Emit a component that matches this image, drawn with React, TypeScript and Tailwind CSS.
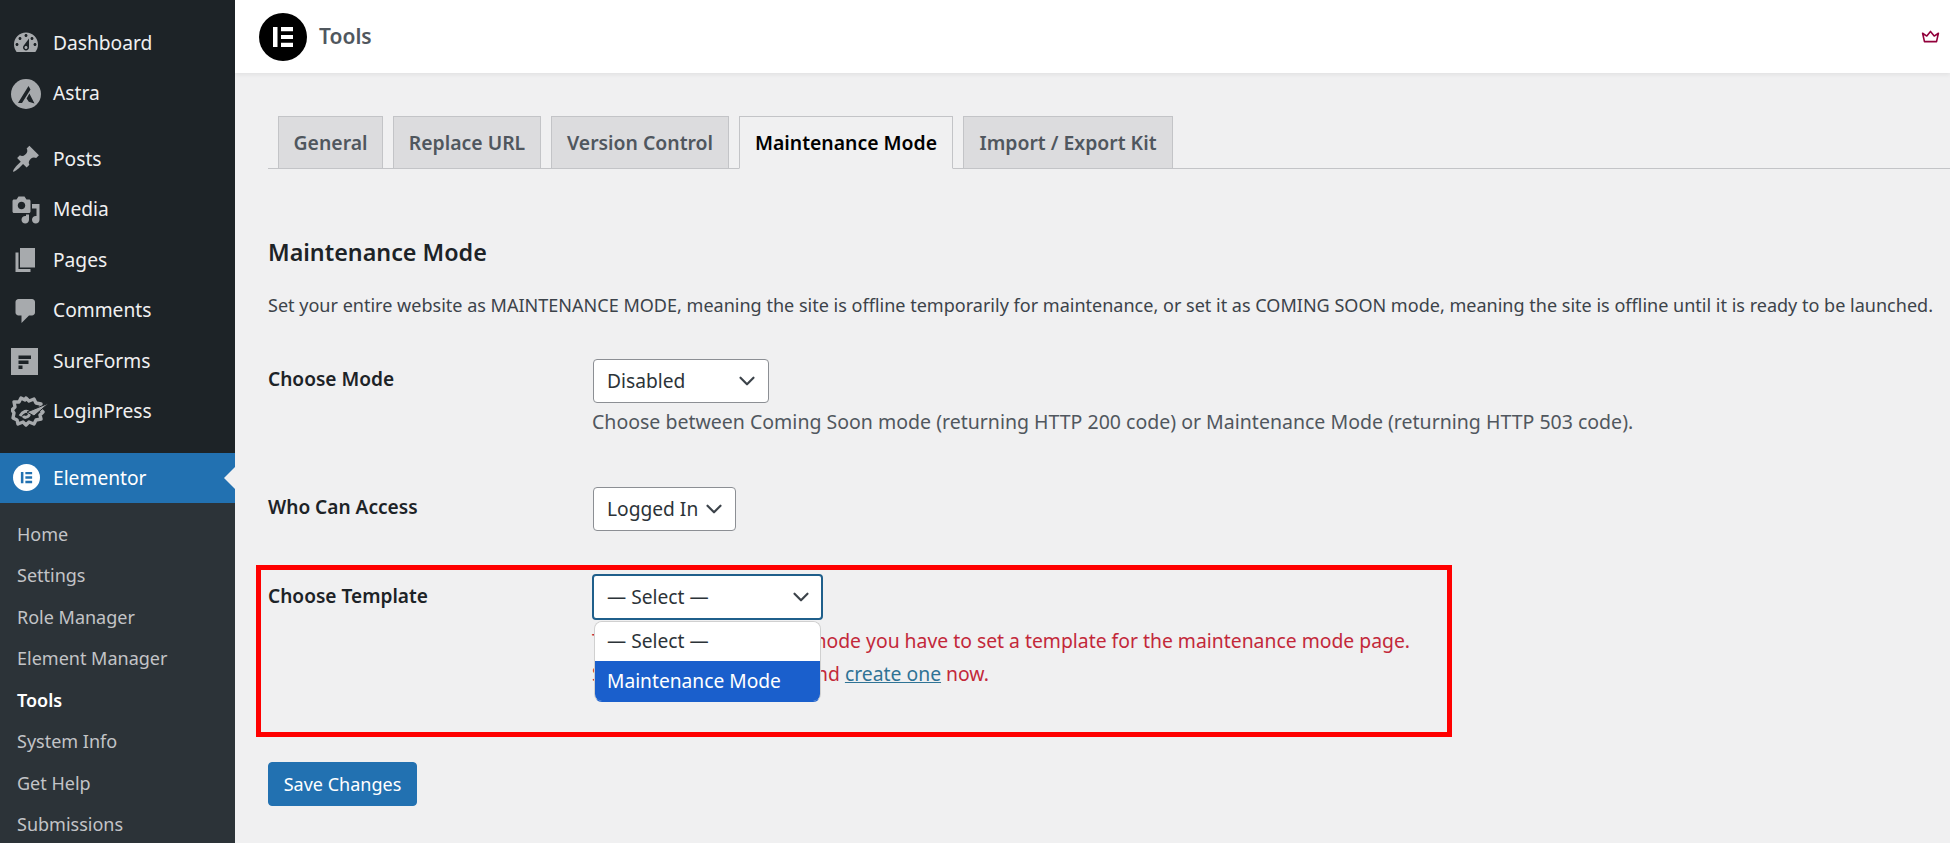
import { ChevronDown } from "lucide-react";
import type { ReactNode } from "react";

const font = "font-['Noto_Sans','Liberation_Sans',sans-serif]";

function Dash({ d }: { d: string }) {
  return (
    <svg viewBox="0 0 20 20" className="h-[30px] w-[30px]" fill="#a7aaad" fillRule="evenodd">
      <path d={d} />
    </svg>
  );
}

function AstraIcon() {
  return (
    <svg viewBox="0 0 30 30" className="h-[30px] w-[30px]">
      <circle cx="15" cy="15" r="15" fill="#a7aaad" />
      <path d="M17.5 7 7 24h4L19.5 10.6zM18.4 14.5 15.6 19.5l2.2 3.3 5.7 1.6z" fill="#1d2327" />
    </svg>
  );
}

function SureFormsIcon() {
  return (
    <svg viewBox="0 0 27 27" className="h-[27px] w-[27px] -translate-x-[2px]">
      <rect width="27" height="27" fill="#a7aaad" />
      <path d="M7.5 7.5h12.5v3.4H7.5zM7.5 12.6h10v3.4H7.5zM7.5 17.6h4v3.4h-4z" fill="#1d2327" />
    </svg>
  );
}

function LoginPressIcon() {
  return (
    <svg viewBox="0 0 40 32" className="h-[32px] w-[40px] translate-x-[5px]" fill="none">
      <path
        d="M15 3l3 3 5-2 2 4 5 1-1 5 3 3-3 3 1 4-5 1-2 4-5-2-3 3-3-3-5 2-1-4-4-2 1-5-2-3 3-3-1-5 5 0 2-4 4 2z"
        stroke="#a7aaad"
        strokeWidth="3.4"
        strokeLinejoin="round"
      />
      <path d="M9 21c3-5 7-6 9-3s-4 6-6 3" stroke="#a7aaad" strokeWidth="3" />
      <path d="M16 17l22-9-15 13z" fill="#a7aaad" stroke="#1d2327" strokeWidth="1" />
    </svg>
  );
}

function ElementorMark({ bg, fg, size }: { bg: string; fg: string; size: string }) {
  return (
    <svg viewBox="0 0 48 48" className={size}>
      <circle cx="24" cy="24" r="24" fill={bg} />
      <path d="M14 14h4.5v20H14zM22 14h12v4.2H22zM22 21.9h12v4.2H22zM22 29.8h12V34H22z" fill={fg} />
    </svg>
  );
}

const topItems: { label: string; icon: ReactNode }[] = [
  {
    label: "Dashboard",
    icon: (
      <Dash d="M3.76 16h12.48c1.1-1.37 1.76-3.11 1.76-5 0-4.42-3.58-8-8-8s-8 3.58-8 8c0 1.89.66 3.63 1.76 5zM10 4c.55 0 1 .45 1 1s-.45 1-1 1-1-.45-1-1 .45-1 1-1zM6 6c.55 0 1 .45 1 1s-.45 1-1 1-1-.45-1-1 .45-1 1-1zm8 0c.55 0 1 .45 1 1s-.45 1-1 1-1-.45-1-1 .45-1 1-1zm-5.37 5.55L12 7v6c0 1.1-.9 2-2 2s-2-.9-2-2c0-.57.24-1.08.63-1.45zM4 10c.55 0 1 .45 1 1s-.45 1-1 1-1-.45-1-1 .45-1 1-1zm12 0c.55 0 1 .45 1 1s-.45 1-1 1-1-.45-1-1 .45-1 1-1zm-5 3c0-.55-.45-1-1-1s-1 .45-1 1 .45 1 1 1 1-.45 1-1z" />
    ),
  },
  { label: "Astra", icon: <AstraIcon /> },
];

const contentItems: { label: string; icon: ReactNode }[] = [
  {
    label: "Posts",
    icon: (
      <Dash d="M10.44 3.02l1.82-1.82 6.36 6.35-1.83 1.82c-1.05-.68-2.48-.57-3.41.36l-.75.75c-.92.93-1.04 2.35-.35 3.41l-1.83 1.82-2.41-2.41-2.8 2.79c-.42.42-3.38 2.71-3.8 2.29s1.86-3.39 2.28-3.81l2.79-2.79L4.1 9.36l1.83-1.82c1.05.69 2.48.57 3.4-.36l.75-.75c.93-.92 1.05-2.35.36-3.41z" />
    ),
  },
  {
    label: "Media",
    icon: (
      <Dash d="M13 11V4c0-.55-.45-1-1-1h-1.67L9 1H5L3.67 3H2c-.55 0-1 .45-1 1v7c0 .55.45 1 1 1h10c.55 0 1-.45 1-1zM7 4.5c1.38 0 2.5 1.12 2.5 2.5S8.38 9.5 7 9.5 4.5 8.38 4.5 7 5.62 4.5 7 4.5zM14 6h5v10.5c0 1.38-1.12 2.5-2.5 2.5S14 17.88 14 16.5s1.12-2.5 2.5-2.5c.17 0 .34.02.5.05V9h-3V6zm-4 8.05V13h2v3.5c0 1.38-1.12 2.5-2.5 2.5S7 17.88 7 16.5 8.12 14 9.5 14c.17 0 .34.02.5.05z" />
    ),
  },
  { label: "Pages", icon: <Dash d="M6 15V2h10v13H6zm-1 1h8v2H3V5h2v11z" /> },
  {
    label: "Comments",
    icon: <Dash d="M5 2h9c1.1 0 2 .9 2 2v7c0 1.1-.9 2-2 2h-2l-5 5v-5H5c-1.1 0-2-.9-2-2V4c0-1.1.9-2 2-2z" />,
  },
  { label: "SureForms", icon: <SureFormsIcon /> },
  { label: "LoginPress", icon: <LoginPressIcon /> },
];

const subItems = ["Home", "Settings", "Role Manager", "Element Manager", "Tools", "System Info", "Get Help", "Submissions"];

const tabs = [
  { label: "General", width: "w-[105px]" },
  { label: "Replace URL", width: "w-[148px]" },
  { label: "Version Control", width: "w-[178px]" },
  { label: "Maintenance Mode", width: "w-[214px]", active: true },
  { label: "Import / Export Kit", width: "w-[210px]" },
];

function NavRow({ label, icon }: { label: string; icon: ReactNode }) {
  return (
    <div className="flex h-[50.4px] items-center text-[19.2px] text-[#f0f0f1]">
      <span className="flex w-[53px] shrink-0 justify-center pr-[1px]">{icon}</span>
      {label}
    </div>
  );
}

function Sidebar() {
  return (
    <aside className="flex w-[235px] shrink-0 flex-col bg-[#1d2327]">
      <div className="shrink-0 pt-[18px]">
        {topItems.map((item) => (
          <NavRow key={item.label} {...item} />
        ))}
      </div>
      <div className="shrink-0 pt-[15.5px]">
        {contentItems.map((item) => (
          <NavRow key={item.label} {...item} />
        ))}
      </div>
      <div className="relative mt-[16.3px] flex h-[50px] shrink-0 items-center bg-[#2271b1] text-[19.2px] text-white">
        <span className="flex w-[53px] justify-center">
          <ElementorMark bg="#ffffff" fg="#2271b1" size="h-[27px] w-[27px]" />
        </span>
        Elementor
        <span className="absolute right-0 top-1/2 h-0 w-0 -translate-y-1/2 border-y-[11px] border-r-[11px] border-y-transparent border-r-[#f0f0f1]" />
      </div>
      <div className="flex-1 shrink-0 bg-[#2c3338] pt-[10.5px]">
        {subItems.map((label) => (
          <div
            key={label}
            className={`flex h-[41.5px] items-center pl-[17px] text-[18px] ${
              label === "Tools" ? "font-semibold text-white" : "text-[#c3c4c7]"
            }`}
          >
            {label}
          </div>
        ))}
      </div>
    </aside>
  );
}

function SelectBox({ value, width }: { value: string; width: string }) {
  return (
    <div className={`flex h-[44px] items-center justify-between whitespace-nowrap rounded-[4px] border border-[#8c8f94] bg-white pl-[13px] pr-[8px] text-[19.2px] text-[#2c3338] ${width}`}>
      {value}
      <ChevronDown size={26} strokeWidth={2} color="#3c434a" />
    </div>
  );
}

export default function App() {
  return (
    <div className={`flex h-[843px] w-[1950px] overflow-hidden bg-[#f0f0f1] ${font}`}>
      <Sidebar />
      <div className="flex min-w-0 flex-1 flex-col">
        <header className="flex h-[73px] shrink-0 items-center justify-between bg-white pl-[24px] pr-[10px] shadow-[0_2px_4px_rgba(0,0,0,0.06)]">
          <div className="flex items-center gap-[12px]">
            <ElementorMark bg="#000000" fg="#ffffff" size="h-[48px] w-[48px]" />
            <span className="text-[21px] font-semibold text-[#50575e]">Tools</span>
          </div>
          <svg viewBox="0 0 20 14" className="h-[13px] w-[19px]" fill="none" stroke="#92003b" strokeWidth="1.7" strokeLinejoin="round">
            <path d="M3.5 12.5 1.5 3.5 6 6.5 10 1.5 14 6.5 18.5 3.5 16.5 12.5z" />
          </svg>
        </header>

        <main className="pl-[33px]">
          <div className="mt-[43px] flex h-[53px] gap-[10px] border-b border-[#c3c4c7] pl-[10px]">
            {tabs.map((tab) => (
              <div
                key={tab.label}
                className={`flex h-[53px] items-center justify-center border border-[#c3c4c7] text-[19.4px] font-semibold ${tab.width} ${
                  tab.active ? "border-b-[#f0f0f1] bg-[#f0f0f1] text-black" : "border-b-[#c3c4c7] bg-[#dcdcde] text-[#50575e]"
                }`}
              >
                {tab.label}
              </div>
            ))}
          </div>

          <h2 className="mt-[68px] text-[23.3px] font-semibold leading-[30px] text-[#1d2327]">Maintenance Mode</h2>
          <p className="mt-[26px] whitespace-nowrap text-[18.05px] leading-[24px] text-[#3c434a]">
            Set your entire website as MAINTENANCE MODE, meaning the site is offline temporarily for maintenance, or set it as COMING SOON mode, meaning the site is offline until it is ready to be launched.
          </p>

          <div className="mt-[42px] flex">
            <div className="w-[325px] pt-[6px] text-[19.1px] font-semibold text-[#1d2327]">Choose Mode</div>
            <div>
              <SelectBox value="Disabled" width="w-[176px]" />
              <p className="ml-[-1px] mt-[7px] whitespace-nowrap text-[19.53px] leading-[24px] text-[#50575e]">
                Choose between Coming Soon mode (returning HTTP 200 code) or Maintenance Mode (returning HTTP 503 code).
              </p>
            </div>
          </div>

          <div className="mt-[53px] flex">
            <div className="w-[325px] pt-[6px] text-[19.1px] font-semibold text-[#1d2327]">Who Can Access</div>
            <SelectBox value="Logged In" width="w-[143px]" />
          </div>

          <div className="ml-[-12px] mt-[34px] h-[172px] w-[1196px] border-[5px] border-[#ff0000] pl-[7px] pt-[4px]">
            <div className="flex">
              <div className="w-[324px] pt-[8px] text-[19.1px] font-semibold text-[#1d2327]">Choose Template</div>
              <div>
                <div className="relative">
                  <div className="flex h-[46px] w-[231px] items-center justify-between rounded-[4px] border-2 border-[#1f5f8b] bg-white pl-[13px] pr-[7px] text-[19.2px] text-[#2c3338]">
                    — Select —
                    <ChevronDown size={26} strokeWidth={2} color="#3c434a" />
                  </div>
                  <div className="absolute left-[2px] top-[47px] z-10 w-[227px] overflow-hidden rounded-[8px] border border-t-[#d0d0d0] border-x-[#d0d0d0] border-b-[#1a5fcc] text-[19.2px]">
                    <div className="flex h-[39px] items-center bg-white pl-[12px] text-[#2c3338]">— Select —</div>
                    <div className="flex h-[40px] items-center bg-[#1a5fcc] pl-[12px] text-white">Maintenance Mode</div>
                  </div>
                </div>
                <div className="mt-[5px] whitespace-nowrap text-[19.35px] leading-[32.5px] text-[#c3283a]">
                  <p>To enable maintenance mode you have to set a template for the maintenance mode page.</p>
                  <p>
                    Select one or go ahead and <span className="text-[#2f7395] underline">create one</span> now.
                  </p>
                </div>
              </div>
            </div>
          </div>

          <button className="mt-[25px] flex h-[44px] w-[149px] items-center justify-center rounded-[4px] border border-[#2271b1] bg-[#2271b1] text-[18px] text-white">
            Save Changes
          </button>
        </main>
      </div>
    </div>
  );
}
